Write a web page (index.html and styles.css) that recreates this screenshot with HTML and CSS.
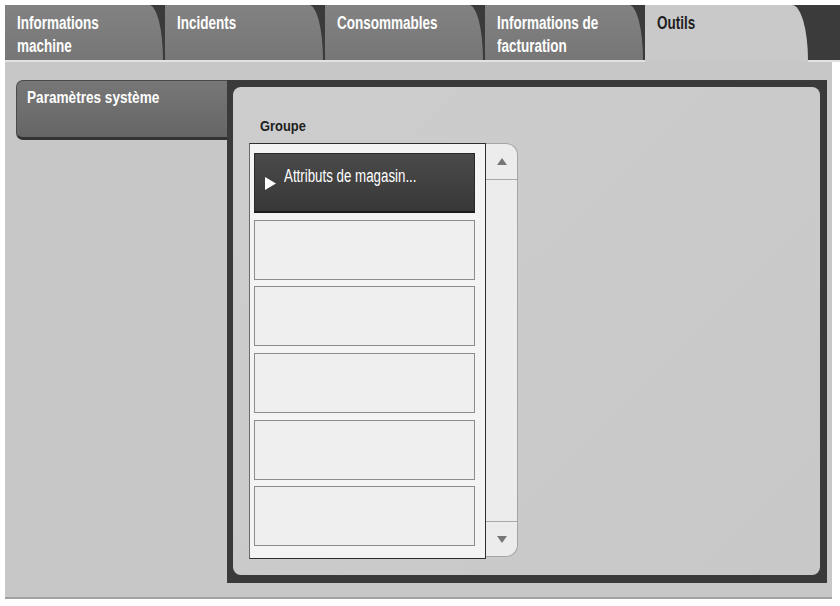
FILE: index.html
```html
<!DOCTYPE html>
<html lang="fr">
<head>
<meta charset="utf-8">
<title>Outils</title>
<link rel="stylesheet" href="styles.css">
</head>
<body>
<div class="app">
  <div class="tabbar">
    <div class="tab"><span class="txt">Informations<br>machine</span></div>
    <div class="tab"><span class="txt">Incidents</span></div>
    <div class="tab"><span class="txt">Consommables</span></div>
    <div class="tab"><span class="txt">Informations de<br>facturation</span></div>
    <div class="tab active"><span class="txt">Outils</span></div>
  </div>
  <div class="panel">
    <div class="sidenav">
      <div class="sidetab"><span class="txt">Paramètres système</span></div>
    </div>
    <div class="frame">
      <div class="content">
        <div class="group-label"><span class="txt">Groupe</span></div>
        <div class="listwrap">
          <div class="listbox">
            <div class="item selected">
              <svg class="arrow" viewBox="0 0 11 13" width="11" height="13"><polygon points="0,0 11,6.5 0,13" fill="#ffffff"/></svg>
              <span class="txt item-text">Attributs de magasin...</span>
            </div>
            <div class="item"></div>
            <div class="item"></div>
            <div class="item"></div>
            <div class="item"></div>
            <div class="item"></div>
          </div>
          <div class="scrollbar">
            <div class="sb-btn up"><svg viewBox="0 0 10 7" width="10" height="7"><polygon points="0,7 10,7 5,0" fill="#777777"/></svg></div>
            <div class="sb-track"></div>
            <div class="sb-btn down"><svg viewBox="0 0 10 7" width="10" height="7"><polygon points="0,0 10,0 5,7" fill="#777777"/></svg></div>
          </div>
        </div>
      </div>
    </div>
  </div>
</div>
</body>
</html>
```
FILE: styles.css
```css
* { box-sizing: border-box; }

body {
  margin: 0;
  background: #ffffff;
  font-family: "Liberation Sans", Arial, sans-serif;
}

/* condensed lettering: Arial-metric text narrowed like a condensed face */
.txt {
  display: inline-block;
  transform-origin: left center;
  white-space: nowrap;
}

.app {
  width: 840px;
  padding: 5px 0 0 5px;
}

.tabbar {
  display: flex;
  gap: 2px;
  height: 57px;
  background: #3b3b3b;
  border-bottom: 2px solid #e2e2e2;
}

.tab {
  flex: none;
  width: 158px;
  height: 55px;
  padding: 7px 0 0 12px;
  background: linear-gradient(#828282, #767676);
  color: #ffffff;
  font-weight: bold;
  font-size: 18px;
  line-height: 23px;
  border-top-right-radius: 14px 55px;
}

.tab .txt {
  transform: scaleX(0.75);
}

.tab.active {
  width: 163px;
  height: 57px;
  background: #c9c9c9;
  color: #1e1e1e;
  border-top-right-radius: 16px 55px;
}

.panel {
  display: flex;
  width: 827px;
  height: 537px;
  padding: 18px 5px 14px 11px;
  background: #c7c7c7;
  border-bottom: 2px solid #a2a2a2;
}

.sidenav {
  flex: none;
  width: 211px;
}

.sidetab {
  height: 60px;
  padding: 7px 0 0 10px;
  background: linear-gradient(#777777, #666666);
  border: 1px solid #4a4a4a;
  border-right: none;
  border-bottom: 3px solid #333333;
  border-radius: 7px 0 0 7px;
  color: #ffffff;
  font-weight: bold;
  font-size: 17px;
  line-height: 20px;
}

.sidetab .txt {
  transform: scaleX(0.8);
}

.frame {
  flex: none;
  width: 600px;
  height: 503px;
  padding: 7px 7px 8px 6px;
  background: #3a3a3a;
}

.content {
  height: 100%;
  padding: 30px 0 0 16px;
  background: linear-gradient(135deg, #cdcdcd, #c8c8c8);
  border-radius: 8px;
}

.group-label {
  padding-left: 11px;
  color: #1e1e1e;
  font-weight: bold;
  font-size: 15px;
  line-height: 18px;
}

.group-label .txt {
  transform: scaleX(0.86);
}

.listwrap {
  display: flex;
  align-items: flex-start;
  margin-top: 8px;
}

.listbox {
  display: flex;
  flex-direction: column;
  gap: 6.67px;
  width: 237px;
  height: 416px;
  padding: 9px 10px 0 4px;
  background: #f4f4f4;
  border: 1px solid #2e2e2e;
  border-left-color: #6a6a6a;
}

.item {
  flex: none;
  height: 60px;
  background: #efefef;
  border: 1px solid #8c8c8c;
}

.item.selected {
  display: flex;
  align-items: flex-start;
  padding: 12px 0 0 10px;
  background: linear-gradient(#4a4a4a, #383838);
  border: 1px solid #2a2a2a;
  border-bottom: 2px solid #1c1c1c;
  color: #ffffff;
  font-size: 18px;
  line-height: 20px;
}

.item-text {
  transform: scaleX(0.74);
}

.arrow {
  flex: none;
  margin: 11px 8px 0 0;
}

.scrollbar {
  display: flex;
  flex-direction: column;
  width: 32px;
  height: 414px;
  background: #ececec;
  border: 1px solid #a5a5a5;
  border-left: none;
  border-radius: 0 12px 12px 0;
}

.sb-btn {
  display: flex;
  align-items: center;
  justify-content: center;
  height: 36px;
  flex: none;
}

.sb-btn.up {
  border-bottom: 1px solid #a8a8a8;
}

.sb-btn.down {
  height: 35px;
  border-top: 1px solid #a8a8a8;
}

.sb-track {
  flex: 1;
}
```
